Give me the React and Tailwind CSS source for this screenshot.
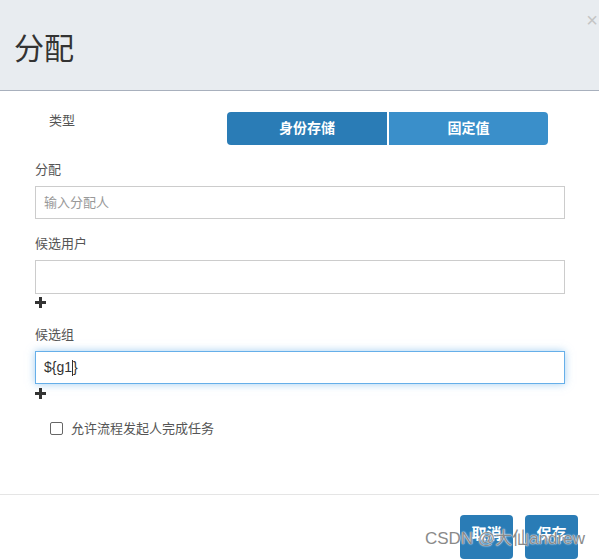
import React from "react";

const font = { fontFamily: '"Liberation Sans", "Noto Sans CJK SC", sans-serif' };

const PlusIcon = () => (
  <svg width="11" height="11" viewBox="0 0 11 11" className="block">
    <rect x="4" y="0" width="3" height="11" fill="#333" />
    <rect x="0" y="4" width="11" height="3" fill="#333" />
  </svg>
);

const Field = ({ label, children }) => (
  <div className="flex flex-col">
    <label className="text-[13px] leading-[16px] text-[#555] mb-[8px]">{label}</label>
    {children}
  </div>
);

export default function App() {
  return (
    <div className="w-[599px] h-[559px] overflow-hidden bg-white relative" style={font}>
      {/* Header */}
      <div className="h-[91px] bg-[#e8ecf0] border-b border-[#a8b0bd] flex items-start relative">
        <h1 className="text-[30px] leading-[36px] text-[#333] pl-[14px] pt-[31px]">分配</h1>
        <span className="absolute right-[1px] top-[10px] text-[20px] leading-[20px] text-[#c4c4c4]">×</span>
      </div>

      {/* Body */}
      <div className="px-[35px] pt-[21px] h-[403px]">
        <div className="flex items-start">
          <span className="text-[13px] leading-[16px] text-[#555] ml-[14px] mt-[1px]">类型</span>
          <div className="flex ml-[152px]">
            <button className="w-[160px] h-[33px] bg-[#2a7cb6] text-white font-bold text-[14px] rounded-l-[4px]">身份存储</button>
            <button className="w-[159px] h-[33px] bg-[#3a8fca] text-white font-bold text-[14px] rounded-r-[4px] ml-[2px]">固定值</button>
          </div>
        </div>

        <div className="mt-[17px]">
          <Field label="分配">
            <input
              className="w-[530px] h-[33px] border border-[#ccc] px-[8px] text-[13px] text-[#333] placeholder:text-[#999] outline-none"
              placeholder="输入分配人"
            />
          </Field>
        </div>

        <div className="mt-[17px]">
          <Field label="候选用户">
            <input className="w-[530px] h-[34px] border border-[#ccc] px-[8px] text-[13px] outline-none" />
          </Field>
          <div className="mt-[3px]"><PlusIcon /></div>
        </div>

        <div className="mt-[19px]">
          <Field label="候选组">
            <div className="w-[530px] h-[33px] border border-[#66afe9] shadow-[0_0_8px_rgba(102,175,233,0.6)] px-[8px] flex items-center text-[14px] text-[#333]">
              ${"{g1"}<span className="inline-block w-px h-[16px] bg-[#333]" />{"}"}
            </div>
          </Field>
          <div className="mt-[4px]"><PlusIcon /></div>
        </div>

        <label className="flex items-center ml-[15px] mt-[20px] text-[13px] text-[#555]">
          <span className="inline-block w-[13px] h-[13px] border border-[#666] rounded-[2px] bg-white" />
          <span className="ml-[8px]">允许流程发起人完成任务</span>
        </label>
      </div>

      {/* Footer */}
      <div className="border-t border-[#e5e5e5] flex justify-end pr-[21px] pt-[20px] gap-[12px]">
        <button className="w-[53px] h-[44px] bg-[#2a7cb6] text-white font-bold text-[15px] rounded-[4px] leading-none pb-[8px]">取消</button>
        <button className="w-[53px] h-[44px] bg-[#2a7cb6] text-white font-bold text-[15px] rounded-[4px] leading-none pb-[8px]">保存</button>
      </div>

      {/* Watermark */}
      <span
        className="absolute left-[425px] top-[529px] text-[17px] leading-[20px] text-[#8a8a8a] whitespace-nowrap"
        style={{ textShadow: "0 0 2px #fff, 0 0 1px #fff" }}
      >
        CSDN @大仙andrew
      </span>
    </div>
  );
}
